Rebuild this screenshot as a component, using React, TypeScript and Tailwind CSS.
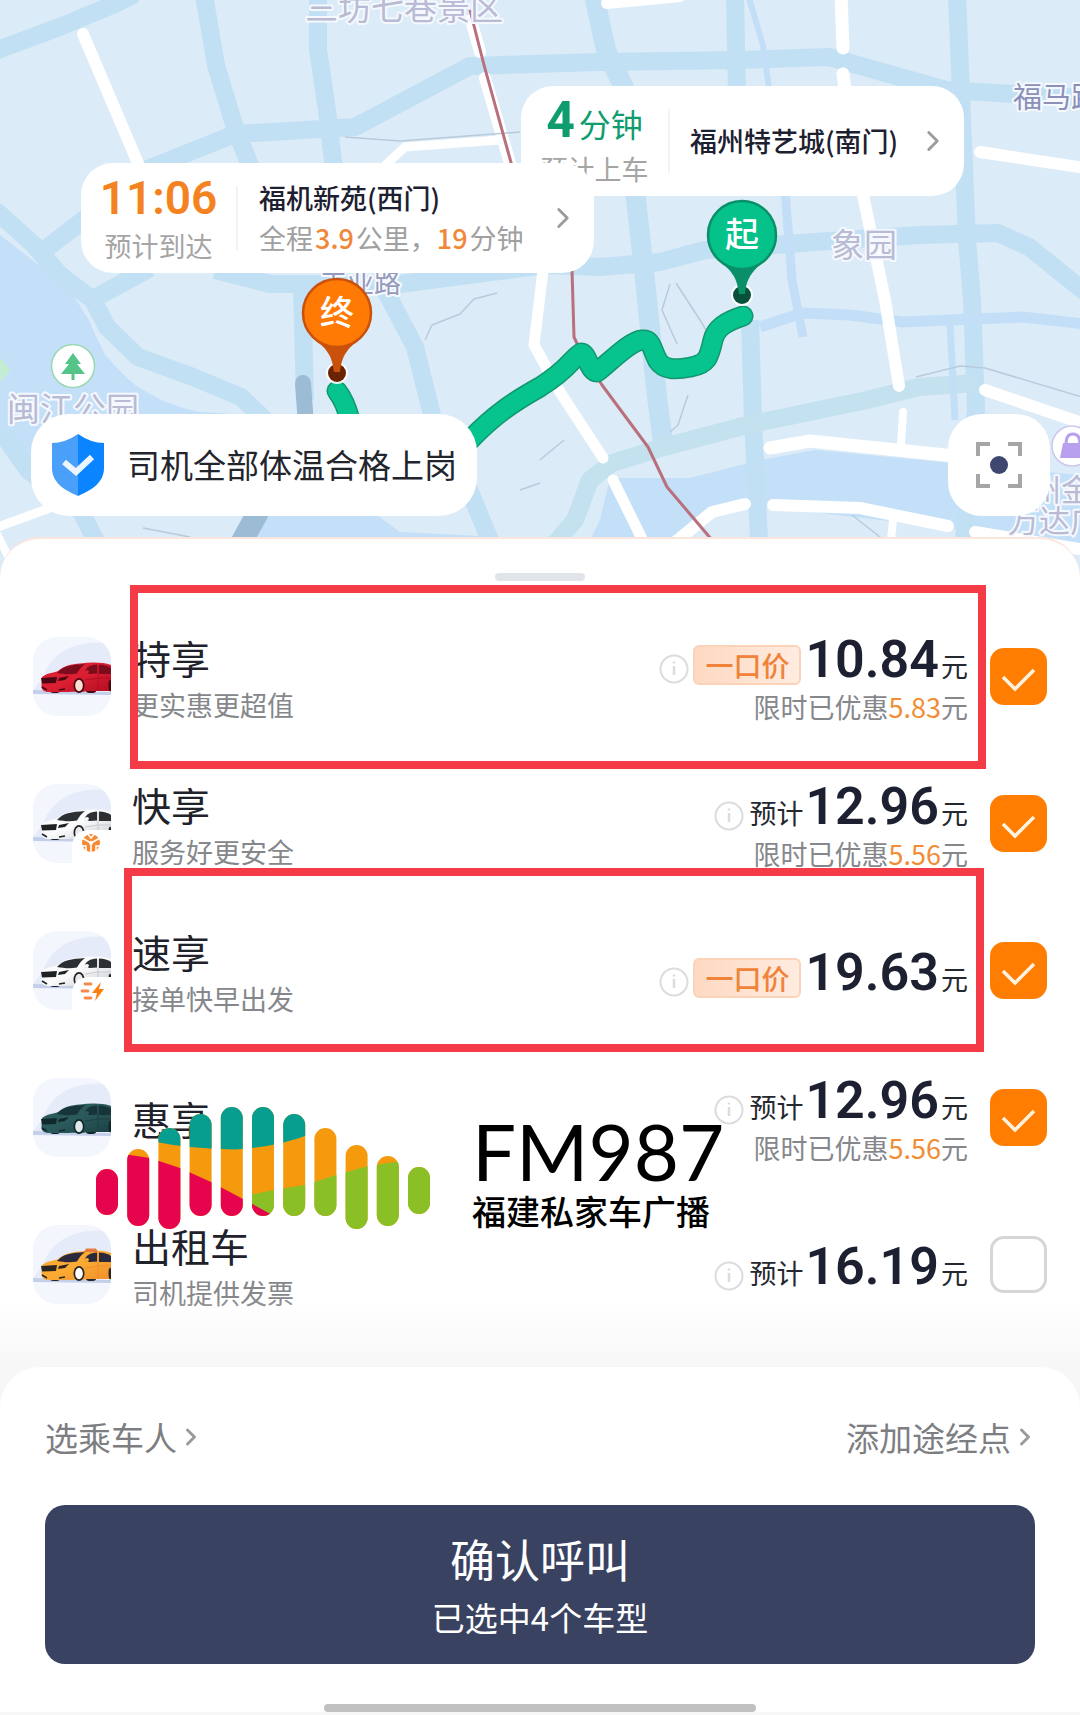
import React from 'react'
import { ChevronRight } from 'lucide-react'

const cars = [
  {
    name: '特享',
    desc: '更实惠更超值',
    price: '10.84',
    fixed: true,
    discount: '5.83',
    checked: true,
    body: '#dc1f33',
    shade: '#b30d22',
    glass: '#7a0c1c',
    trim: '#4a0711',
    wheel: '#fbdfd0',
    mark: 'box-one',
  },
  {
    name: '快享',
    desc: '服务好更安全',
    price: '12.96',
    discount: '5.56',
    checked: true,
    body: '#fbfbfc',
    shade: '#c9cbd2',
    glass: '#2c3033',
    trim: '#1f2224',
    wheel: '#e9eaec',
    badge: 'flower',
  },
  {
    name: '速享',
    desc: '接单快早出发',
    price: '19.63',
    fixed: true,
    checked: true,
    body: '#fbfbfc',
    shade: '#c9cbd2',
    glass: '#2c3033',
    trim: '#1f2224',
    wheel: '#e9eaec',
    badge: 'bolt',
    mark: 'box-two',
  },
  {
    name: '惠享',
    price: '12.96',
    discount: '5.56',
    checked: true,
    body: '#2b5a5c',
    shade: '#1c4145',
    glass: '#173438',
    trim: '#10282b',
    wheel: '#dfe8ea',
  },
  {
    name: '出租车',
    desc: '司机提供发票',
    price: '16.19',
    checked: false,
    body: '#fbab33',
    shade: '#ef8f2b',
    glass: '#2b2a3c',
    trim: '#2b2622',
    wheel: '#ffffff',
    taxi: true,
  },
]

const routePath =
  'M743 316C725 322 716 328 713 340C709 358 707 364 691 367C675 370 664 370 658 361C651 348 652 339 642 340C630 341 610 362 597 372C589 372 587 352 581 353C570 360 570 368 540 387C515 401 495 414 470 440M337 391Q345 401 350 420'

const CarIcon = ({ car, id }) => {
  return (
    <svg viewBox="0 0 78 79" className="w-[78px] h-[79px] shrink-0" aria-hidden="true">
      <defs>
        <clipPath id={`tile-${id}`}>
          <rect width="78" height="79" rx="24" />
        </clipPath>
        <linearGradient id={`body-${id}`} x1="0" y1="0" x2="1" y2="1">
          <stop offset="0" stopColor={car.body} />
          <stop offset="0.5" stopColor={car.body} />
          <stop offset="1" stopColor={car.shade} />
        </linearGradient>
      </defs>
      <g clipPath={`url(#tile-${id})`}>
        <rect width="78" height="79" fill="#f4f6fe" />
        <path d="M10 40C20 12 45 3 78 6V54H0C2 50 6 46 10 40Z" fill="#e6ebfa" />
        <path d="M0 53L78 55V58L0 57Z" fill="#c4cfe9" />
      </g>
      <ellipse cx="22" cy="54" rx="5" ry="2" fill={car.trim} />
      <ellipse cx="58" cy="54" rx="5" ry="2" fill={car.trim} />
      <path
        d="M9 40C14 36 20 36 25 34C31 29 38 27 47 26.500C58 25 70 25 78 28V54L54 54C48 56 42 54 36 55L14 55C10 54 8 52 8.500 48Z"
        fill={`url(#body-${id})`}
      />
      <path d="M24 36C30 29 38 28 52 27C48 30 46 33 44 36.500C37 38 30 37 24 36Z" fill={car.glass} />
      <path d="M51 36C53 30 57 28 64 27.500V36.500L57 37Z" fill={car.glass} />
      <path d="M66 27.500C71 27.500 75 29 78 31V37H66Z" fill={car.glass} />
      <path d="M50 36Q53 31 56 34L55 37Z" fill={car.body} />
      <path d="M8 41L24 40L23 46L9 46.500Z" fill={car.trim} />
      <path d="M26 41L36 39L32 43L25 44Z" fill={car.trim} />
      <path d="M9 50L14 53M26 53L32 52" stroke={car.trim} strokeWidth="1.500" />
      <path d="M65 28V54" stroke={car.shade} strokeWidth="1" />
      <path d="M52 43Q66 40 78 41" stroke={car.shade} strokeWidth="1" fill="none" />
      <ellipse cx="46" cy="48.500" rx="5.500" ry="7.500" fill={car.trim} />
      <ellipse cx="46" cy="48.500" rx="3.800" ry="5.800" fill={car.wheel} />
      <ellipse cx="77" cy="48.500" rx="1.500" ry="6" fill={car.trim} />
      {car.taxi && <path d="M51 27L53 23.500H63L65 27Z" fill="#e77a3c" />}
      {car.badge && <path d="M39 79V64Q39 46 57 46H78V79Z" fill="#fff" />}
      {car.badge === 'flower' && (
        <g fill="none">
          <circle cx="58" cy="59" r="5.500" stroke="#f58a35" strokeWidth="7" />
          <path d="M58 59V69M58 59L49 54M58 59L67 54M54 49L58 54L62 49M48 62H53L53 67M68 62H63V67" stroke="#fff" strokeWidth="1.500" />
        </g>
      )}
      {car.badge === 'bolt' && (
        <>
          <path d="M52 53H58M49 60H55M52 67H58" stroke="#f58a4a" strokeWidth="2.800" strokeLinecap="round" />
          <path d="M68 51L59 62H64L62 70L71 58H66Z" fill="#ff7d0a" />
        </>
      )}
    </svg>
  )
}

const InfoIcon = () => {
  return (
    <svg viewBox="0 0 30 30" className="w-[30px] h-[30px] shrink-0 self-end mb-1" fill="none" stroke="#dcdcdc" strokeWidth="2" aria-hidden="true">
      <circle cx="15" cy="15" r="13.500" />
      <path d="M15 12V21M15 7.500V9.500" strokeWidth="2.500" />
    </svg>
  )
}

const CarRow = ({ car, index }) => {
  return (
    <li className="relative">
      <label className="flex items-center h-[147px] px-[33px]">
        <CarIcon car={car} id={index} />
        <span className="flex flex-col pl-[21px]">
          <span className="text-[39px] leading-[56px] text-[#1f222b]">{car.name}</span>
          {car.desc && <span className="text-[27px] leading-10 text-[#86878b]">{car.desc}</span>}
        </span>
        <span className="ml-auto mr-[22px] pt-1 flex flex-col items-end">
          <span className="flex items-baseline h-14 text-[27px] leading-[56px] text-[#26282f]">
            <span className="flex self-end h-12">
              <InfoIcon />
            </span>
            {car.fixed ? (
              <span className="mx-1 px-[10px] h-10 leading-9 text-[28px] font-medium text-[#f0833a] rounded-md border-2 border-[#fbd3b8] bg-linear-to-r from-[#fdd9c2] to-[#ffece0]">
                一口价
              </span>
            ) : (
              <span className="ml-[5px] mr-0.5">预计</span>
            )}
            <span className="font-['Roboto',sans-serif] font-semibold text-[52px] text-[#1d2030]">{car.price}</span>
            <span className="ml-0.5">元</span>
          </span>
          {car.discount && (
            <span className="text-[27px] leading-[38px] text-[#86878b]">
              限时已优惠<span className="text-[#f28c35]">{car.discount}</span>元
            </span>
          )}
        </span>
        <span className="grid shrink-0">
          <input
            type="checkbox"
            defaultChecked={car.checked}
            aria-label={car.name}
            className="peer col-start-1 row-start-1 appearance-none w-[57px] h-[57px] rounded-[14px] border-[3px] border-[#d6d6d6] bg-white checked:bg-[#ff7d00] checked:border-[#ff7d00]"
          />
          <svg viewBox="0 0 57 57" className="hidden peer-checked:block pointer-events-none col-start-1 row-start-1 w-[57px] h-[57px]" fill="none" stroke="#fff3e0" strokeWidth="3.500">
            <path d="M13 29L25 41L44 22" />
          </svg>
        </span>
      </label>
      {car.mark === 'box-one' && (
        <div className="absolute pointer-events-none left-[130px] right-[94px] -top-[18px] h-[184px] border-8 border-[#f53b45]" />
      )}
      {car.mark === 'box-two' && (
        <div className="absolute pointer-events-none left-[124px] right-24 -top-[29px] h-[184px] border-8 border-[#f53b45]" />
      )}
    </li>
  )
}

const Pin = ({ x, y, label, fill, edge, dot }) => {
  return (
    <g transform={`translate(${x} ${y})`}>
      <circle cx="0" cy="60" r="11" fill="#fff" opacity="0.9" />
      <circle cx="0" cy="60" r="9" fill={dot} />
      <path d="M-25 24C-10 36 -5 42 -3 59H3C5 42 10 36 25 24Z" fill={edge} />
      <circle r="34" fill={fill} stroke={edge} strokeWidth="2.500" />
      <text y="12" textAnchor="middle" fontSize="34" fontWeight="500" fill="#fff">
        {label}
      </text>
    </g>
  )
}

const RouteMap = () => {
  return (
    <svg
      viewBox="0 0 1080 600"
      preserveAspectRatio="xMidYMid slice"
      className="absolute inset-0 w-full h-full"
      fill="none"
      strokeLinejoin="round"
      aria-hidden="true"
    >
      <rect width="1080" height="600" fill="#dcebf8" />

      {/* water */}
      <g fill="#c3e0f8">
        <path d="M0 235L35 262L70 290L92 325L105 355L135 385L200 410L240 415V470H28L0 430Z" />
        <path d="M610 478L690 478L760 460L815 450L1080 475V600H560L600 520Z" />
        <path d="M230 600L258 510H370L400 532L500 537V600Z" />
      </g>
      <path d="M0 358L11 370L0 382Z" fill="#c4ecd3" />
      <path d="M90 322C105 365 140 400 200 412L262 415L230 395L160 370Z" fill="#dcebf8" />
      <path d="M640 600L690 525L750 505L950 528L1080 545V600Z" fill="#dcebf8" />

      {/* blue roads */}
      <g stroke="#c2e0f3" strokeWidth="18">
        <path d="M-5 51L62 26L115 4L135 -6" />
        <path d="M204 -5L216 65L235 128L252 170" />
        <path d="M318 -5V50L327 110L334 170" />
        <path d="M140 172L235 134L355 127L470 66L600 62L740 60L829 57L946 90L1085 98" />
        <path d="M-5 210L34 245L60 275L93 300L107 327L138 357L193 377L241 397L265 420" />
        <path d="M34 258L90 215M95 298L150 268" />
        <path d="M215 270L270 284L400 284L545 265L600 267L660 262L705 250L829 241L919 235L998 233L1029 247L1085 292" />
        <path d="M302 285L305 400" />
        <path d="M385 290L415 347L432 415L465 480L492 545" />
        <path d="M0 430L28 470L80 510L98 545" />
        <path d="M594 -5L606 50L625 90M635 190L645 280L657 397L664 450" strokeWidth="20" />
        <path d="M735 -5L737 95M750 320L753 420L760 560" />
        <path d="M957 -5L961 95L967 240L972 300L976 410L962 560" />
      </g>
      <path d="M545 555L575 520L590 480L612 463L664 447L747 425L867 400L919 387L978 383" stroke="#c3e1ee" strokeWidth="18" />
      <g stroke="#c3dff7">
        <path d="M760 327L802 313L850 315L902 322L1022 317L1085 324" strokeWidth="11" />
        <path d="M785 190L792 280L803 337" strokeWidth="9" />
        <path d="M950 322L955 420" strokeWidth="7" />
        <path d="M748 -5L763 45L770 95" strokeWidth="6" />
      </g>
      <g stroke="#9cbbd4" strokeLinecap="round">
        <path d="M303 383L306 425" strokeWidth="16" />
        <path d="M262 505L240 545" strokeWidth="22" />
      </g>

      {/* white roads */}
      <g stroke="#fff" strokeWidth="12" strokeLinecap="round">
        <path d="M83 34L140 168" />
        <path d="M380 170L405 147L500 140" strokeWidth="9" />
        <path d="M471 20L480 52M485 78L512 170" />
        <path d="M607 3L680 -4" />
        <path d="M841 -5L843 48M843 74L845 90" strokeWidth="13" />
        <path d="M862 190L885 300L899 386" />
        <path d="M903 412L901 445M893 520L889 560" strokeWidth="8" />
        <path d="M980 152L1085 168" />
        <path d="M770 448L810 441L955 456" strokeWidth="13" />
        <path d="M543 270L534 345L560 392L603 458M613 480L650 555" strokeWidth="11" />
        <path d="M985 390L1085 424" />
        <path d="M668 548L712 512L745 504M773 505L860 508L948 526M975 532L1085 550" />
        <path d="M-5 528L50 508" strokeWidth="9" />
        <path d="M-5 530L10 560" strokeWidth="8" />
      </g>

      {/* lanes */}
      <g stroke="#b8cbdc" strokeWidth="1.500">
        <path d="M345 137L400 141L520 132" />
        <path d="M425 340L432 325L460 314L474 299L497 293" />
        <path d="M670 284L662 310L677 344M676 283L700 320L712 340" />
        <path d="M540 460L564 440M520 490L540 483M688 395L678 425L670 432" />
        <path d="M916 377L960 366L985 368L1085 398" />
        <path d="M852 515L880 537M143 528L190 537" />
      </g>

      {/* subway */}
      <path d="M470 10L484 65L512 166M572 270L574 337L581 352L602 385L648 447L667 487L712 540" stroke="#b9707c" strokeWidth="3" />

      {/* place names */}
      <g stroke="#f5f9fe" strokeWidth="4" paintOrder="stroke" fill="#b9bbd4">
        <text x="305" y="20" fontSize="33">三坊七巷景区</text>
        <text x="1013" y="108" fontSize="29" fill="#8b90b8">福马路</text>
        <text x="831" y="257" fontSize="33">象园</text>
        <text x="320" y="293" fontSize="27" fill="#959abb">工业路</text>
        <text x="7" y="421" fontSize="33">闽江公园</text>
        <text x="1030" y="501" fontSize="31">州金</text>
        <text x="1008" y="532" fontSize="31">万达广</text>
      </g>

      <circle cx="73" cy="366" r="21.500" fill="#fff" stroke="#98d8ae" strokeWidth="1.500" />
      <path d="M73 353L81 364H77L85 374H74.500V380H71.500V374H61L69 364H65Z" fill="#55c488" />
      <circle cx="1072" cy="446" r="20" fill="#fff" stroke="#cfc6ee" strokeWidth="1.500" />
      <path d="M1063 443H1082L1085 458H1060Z" fill="#b9a0ee" />
      <path d="M1066 444Q1066 434 1073 434Q1080 434 1080 444" stroke="#b9a0ee" strokeWidth="3" />

      {/* route */}
      <g strokeLinecap="round">
        <path d={routePath} stroke="#12966d" strokeWidth="21" />
        <path d={routePath} stroke="#07c38d" strokeWidth="18" />
      </g>

      <Pin x={742} y={235} label="起" fill="#05c18a" edge="#0a9068" dot="#08503a" />
      <Pin x={337} y={313} label="终" fill="#ff7a05" edge="#c9510c" dot="#6b2403" />
    </svg>
  )
}

const StationLogo = () => {
  const bars = [
    [62, 46], [42, 77], [21, 101], [7, 102], [0, 109], [0, 109], [7, 102], [21, 88], [38, 84], [49, 70], [60, 47],
  ]
  return (
    <div className="absolute pointer-events-none left-24 top-[568px] flex items-start gap-[42px] text-black">
      <svg viewBox="0 0 334 122" className="w-[334px] h-[122px]" aria-hidden="true">
        <defs>
          <clipPath id="bars">
            {bars.map(([top, height], i) => (
              <rect key={i} x={i * 31.2} y={top} width="22" height={height} rx="11" />
            ))}
          </clipPath>
        </defs>
        <g clipPath="url(#bars)">
          <rect width="334" height="122" fill="#f59a0c" />
          <path d="M55 34Q93 42 140 42.500Q180 40 212 28V0H55Z" fill="#079e90" />
          <path d="M153 88L178 83L209 78L240 68L272 59L306 54V0H334V122H153Z" fill="#8abf26" />
          <path d="M0 0H27V47L54 51L84 61L115 75L147 92L180 110V122H0Z" fill="#e6044f" />
        </g>
      </svg>
      <div className="pt-1">
        <p className="font-['Lato',sans-serif] text-[78px] leading-[80px]">FM987</p>
        <p className="text-[34px] leading-[40px] font-medium">福建私家车广播</p>
      </div>
    </div>
  )
}

const App = () => {
  return (
    <main className="min-h-screen flex flex-col bg-white font-['Noto_Sans_CJK_SC',sans-serif] overflow-hidden">
      <section className="relative h-[600px] flex flex-col justify-end pb-[84px] overflow-hidden">
        <RouteMap />

        <button className="absolute left-[521px] top-[86px] h-[110px] w-[443px] rounded-[32px] bg-white flex items-center text-left">
          <span className="w-[147px] flex flex-col items-center">
            <span className="flex items-baseline gap-1 text-[32px] leading-[52px] text-[#0f9c6e]">
              <span className="font-['Roboto',sans-serif] font-bold text-[50px]">4</span>分钟
            </span>
            <span className="text-[27px] leading-10 text-[#a5a5a5]">预计上车</span>
          </span>
          <span className="w-0.5 h-16 bg-[#f3f3f3]" />
          <span className="pl-5 text-[27px] font-medium text-[#1d2030]">福州特艺城(南门)</span>
          <ChevronRight className="ml-auto mr-3.5 w-[34px] h-[34px] text-[#9c9c9c]" />
        </button>

        <button className="absolute left-[81px] top-[163px] h-[110px] w-[513px] rounded-[32px] bg-white flex items-center text-left">
          <span className="w-[155px] flex flex-col items-center">
            <span className="font-['Roboto',sans-serif] font-semibold text-[46px] leading-[56px] text-[#f58220]">11:06</span>
            <span className="text-[27px] leading-10 text-[#a5a5a5]">预计到达</span>
          </span>
          <span className="w-0.5 h-16 bg-[#f3f3f3]" />
          <span className="pl-[21px] flex flex-col text-[27px] leading-10">
            <span className="font-medium text-[#1d2030]">福机新苑(西门)</span>
            <span className="text-[#a0a0a0]">
              全程<span className="px-0.5 font-medium text-[#f0883a]">3.9</span>公里，
              <span className="pr-0.5 font-medium text-[#f0883a]">19</span>分钟
            </span>
          </span>
          <ChevronRight className="ml-auto mr-3.5 w-[34px] h-[34px] shrink-0 text-[#9c9c9c]" />
        </button>

        <div className="relative flex justify-between pl-[31px] pr-[30px]">
          <div className="h-[102px] rounded-[38px] bg-white flex items-center px-5 gap-[22px]">
            <svg viewBox="0 0 54 62" className="w-[54px] h-[62px]" aria-hidden="true">
              <path d="M27 0Q40 9 53 9V34C53 50 38 57 27 62Z" fill="#0a84ff" />
              <path d="M27 0Q14 9 1 9V34C1 50 16 57 27 62Z" fill="#4a9ff8" />
              <path d="M13 28L25 38L41 23" fill="none" stroke="#eaf5ff" strokeWidth="6" />
            </svg>
            <p className="text-[33px] text-[#23252d]">司机全部体温合格上岗</p>
          </div>
          <button aria-label="定位" className="w-[102px] h-[102px] rounded-[34px] bg-white flex items-center justify-center">
            <svg viewBox="0 0 48 48" className="w-12 h-12" fill="none" stroke="#a6a6a6" strokeWidth="4">
              <path d="M3 15V3H15M33 3H45V15M45 33V45H33M15 45H3V33" />
              <circle cx="24" cy="24" r="9" fill="#3d4770" stroke="none" />
            </svg>
          </button>
        </div>
      </section>

      <section className="relative -mt-[63px] rounded-t-[40px] border-t-2 border-[#fbe5dc] bg-white">
        <div className="mx-auto mt-[34px] w-[90px] h-2 rounded-full bg-[#e1e5e9]" />
        <ul className="mt-[22px]">
          {cars.map((car, index) => (
            <CarRow key={car.name} car={car} index={index} />
          ))}
        </ul>
        <StationLogo />
      </section>

      <footer className="relative -mt-10 pt-[69px] bg-linear-to-b from-transparent to-[#f7f7f7] to-[69px]">
        <div className="rounded-t-[40px] bg-white px-[45px]">
          <div className="flex justify-between pt-[45px] text-[33px] leading-[50px] text-[#7d7e82]">
            <button className="flex items-center">
              选乘车人
              <ChevronRight className="-mr-1 w-7 h-7 text-[#9a9a9a]" strokeWidth={2.5} />
            </button>
            <button className="flex items-center">
              添加途经点
              <ChevronRight className="-mr-1 w-7 h-7 text-[#9a9a9a]" strokeWidth={2.5} />
            </button>
          </div>
          <button className="mt-[43px] w-full h-[159px] rounded-[20px] bg-[#3a4261] text-white flex flex-col items-center justify-center">
            <span className="text-[45px] leading-[64px]">确认呼叫</span>
            <span className="text-[33px] leading-[52px]">已选中4个车型</span>
          </button>
          <div className="mx-auto mt-10 mb-[3px] w-[432px] h-2 rounded-full bg-[#c1c1c1]" />
        </div>
      </footer>
    </main>
  )
}

export default App
